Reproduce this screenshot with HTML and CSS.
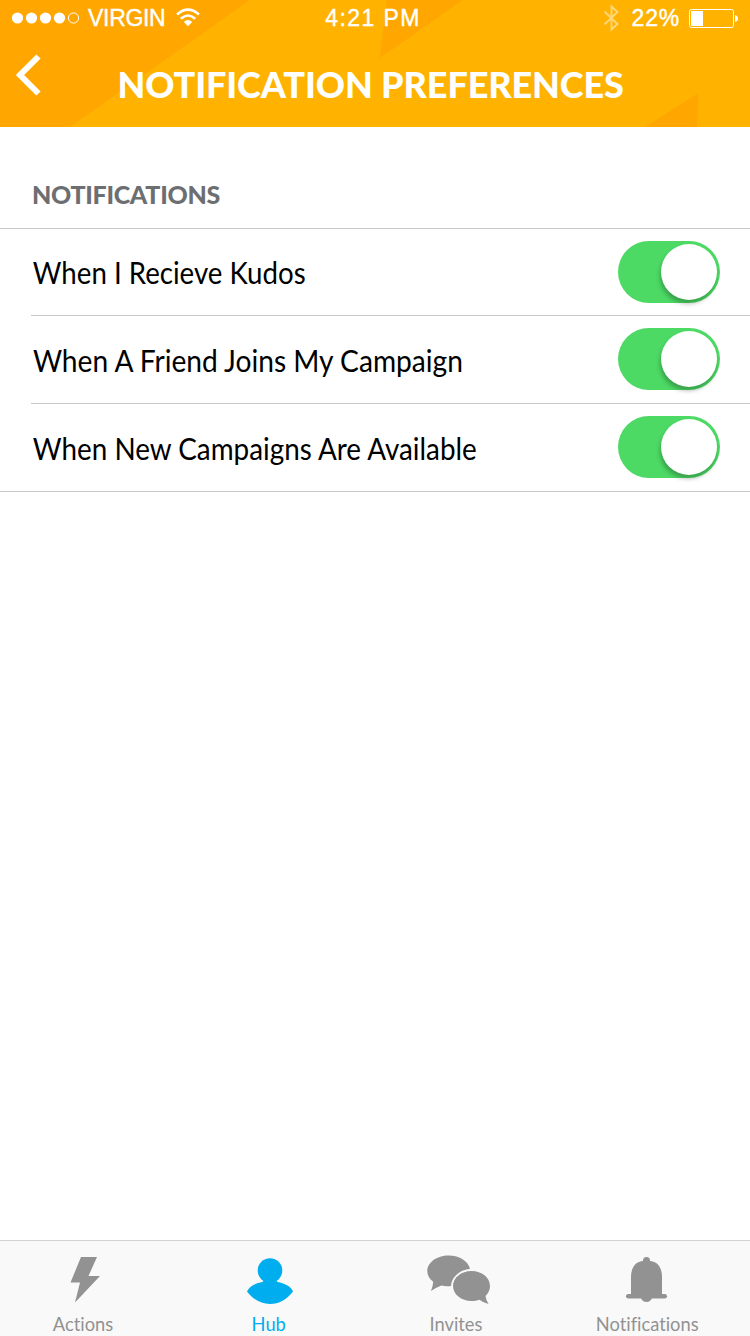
FILE: index.html
```html
<!DOCTYPE html>
<html lang="en">
<head>
<meta charset="utf-8">
<title>Notification Preferences</title>
<link rel="stylesheet" href="styles.css">
</head>
<body>
<div class="screen">
  <header class="header">
    <svg class="header-pattern" viewBox="0 0 750 127" aria-hidden="true">
      <path d="M0 0H250L70 127H0ZM386.500 0H463L380 58ZM645 127L698.500 93L697 127Z" fill="#ffa700"/>
    </svg>
    <div class="status">
      <div class="status-left">
        <svg width="68" height="14" viewBox="0 0 68 14">
          <g fill="#fff"><circle cx="5.500" cy="7" r="5.600"/><circle cx="19.500" cy="7" r="5.600"/><circle cx="33.500" cy="7" r="5.600"/><circle cx="47.500" cy="7" r="5.600"/></g>
          <circle cx="61.500" cy="7" r="5.100" fill="none" stroke="#fff"/>
        </svg>
        <span class="carrier">VIRGIN</span>
        <svg class="wifi" width="24" height="19" viewBox="0 0 24 19" fill="none" stroke="#fff" stroke-width="2.600">
          <path d="M1 6.500Q12 -3.200 23 6.500M4.800 10.700Q12 4.300 19.200 10.700"/>
          <path d="M7.800 14Q12 10.200 16.200 14L12 18.300Z" fill="#fff" stroke="none"/>
        </svg>
      </div>
      <span class="clock">4:21 PM</span>
      <div class="status-right">
        <svg class="bluetooth" width="17" height="28" viewBox="0 0 17 28" fill="none" stroke="#ffd67a" stroke-width="1.900">
          <path d="M1.500 7.500L14.500 20L8.500 25.500V2.500L14.500 8L1.500 20.500"/>
        </svg>
        <span class="percent">22%</span>
        <svg width="49" height="19" viewBox="0 0 49 19">
          <rect x=".5" y=".5" width="44" height="18" rx="2" fill="none" stroke="#fff"/>
          <rect x="2" y="2" width="12" height="15" fill="#fff"/>
          <path d="M46 6Q49 6.500 49 9.500T46 13Z" fill="#fff"/>
        </svg>
      </div>
    </div>
    <div class="titlebar">
      <svg class="back" width="26" height="42" viewBox="0 0 26 42"><path d="M22.500 2.500L4 21L22.500 39.500" fill="none" stroke="#fff" stroke-width="6"/></svg>
      <h1 class="title">NOTIFICATION PREFERENCES</h1>
    </div>
  </header>
  <main class="content">
    <h2 class="section-title">NOTIFICATIONS</h2>
    <ul class="list">
      <li class="row"><span class="label label-kudos">When I Recieve Kudos</span><span class="toggle"><span class="knob"></span></span></li>
      <li class="row"><span class="label label-friend">When A Friend Joins My Campaign</span><span class="toggle"><span class="knob"></span></span></li>
      <li class="row"><span class="label label-campaigns">When New Campaigns Are Available</span><span class="toggle"><span class="knob"></span></span></li>
    </ul>
  </main>
  <nav class="tabs">
    <a class="tab">
      <svg width="110" height="70" viewBox="28 1241 110 70"><path d="M81 1257H97L88.500 1276H100L75 1302.500L80 1282.500H70.500Z" fill="currentColor"/></svg>
      <span class="tab-label">Actions</span>
    </a>
    <a class="tab tab-active">
      <svg width="110" height="70" viewBox="214 1241 110 70"><g fill="currentColor"><circle cx="270" cy="1270.500" r="12.300"/><path d="M264 1280H276L277.500 1282C284.500 1283 291 1286.500 293 1291.500C287 1299.500 279 1304 270 1304S253 1299.500 247 1291.500C249 1286.500 255.500 1283 262.500 1282Z"/></g></svg>
      <span class="tab-label">Hub</span>
    </a>
    <a class="tab">
      <svg width="110" height="70" viewBox="401 1241 110 70"><g fill="currentColor"><path d="M448.500 1255.500C460 1255.500 468.500 1261.500 470 1269C460 1269.500 451.500 1277 451 1286C447.500 1286.500 444.500 1286.300 441.500 1285.500Q436 1287.500 431 1291Q433 1286 433.200 1281.800C429.500 1279 427.300 1275.500 427.300 1271.200C427.300 1262.500 436.800 1255.500 448.500 1255.500Z"/><path d="M471.500 1271C481.800 1271 490 1277.500 490 1286C490 1289.800 488.500 1293 485.500 1296Q486 1300 488.500 1304Q483.500 1303 479.500 1299.700C477 1300.600 474.300 1301 471.500 1301C461.200 1301 453 1294.300 453 1286S461.200 1271 471.500 1271Z"/></g></svg>
      <span class="tab-label">Invites</span>
    </a>
    <a class="tab">
      <svg width="110" height="70" viewBox="592 1241 110 70"><g fill="currentColor"><circle cx="646.500" cy="1260.500" r="3.500"/><path d="M631 1295V1277C631 1267 636 1261.500 643 1261H650C657 1261.500 662 1267 662 1277V1295Z"/><rect x="626" y="1294" width="41" height="4.500" rx="2.250"/><path d="M641 1298Q642.500 1302 646.500 1302T652 1298Z"/></g></svg>
      <span class="tab-label">Notifications</span>
    </a>
  </nav>
</div>
</body>
</html>
```

FILE: styles.css
```css
* { box-sizing: border-box; }
body { margin: 0; background: #fff; font-family: Lato, "Open Sans", sans-serif; font-variant-ligatures: none; }
svg { display: block; flex: none; }
.screen { width: 750px; height: 1336px; display: flex; flex-direction: column; overflow: hidden; }

.header { position: relative; height: 127px; flex: none; background: #ffb300; color: #fff; }
.header-pattern { position: absolute; inset: 0; width: 750px; height: 127px; }
.status { position: relative; height: 36px; display: grid; grid-template-columns: 1fr auto 1fr; align-items: center; padding: 0 12px; font-family: "Liberation Sans", Arial, sans-serif; font-size: 23px; line-height: 36px; -webkit-text-stroke: .4px #fff; }
.status-left, .status-right { display: flex; align-items: center; }
.status-right { justify-content: flex-end; }
.carrier { margin-left: 8px; letter-spacing: -.3px; }
.wifi { margin-left: 11px; margin-bottom: 2px; }
.clock { letter-spacing: 1.4px; margin-right: 4px; }
.percent { margin: 0 9px 0 12px; letter-spacing: .8px; }
.titlebar { position: relative; height: 91px; display: flex; padding-left: 16px; }
.back { margin-top: 18px; }
.title { margin: 25px 0 0 75.5px; font-size: 36px; font-weight: 900; line-height: 46px; letter-spacing: -.1px; white-space: nowrap; }

.content { flex: 1; }
.section-title { margin: 0; height: 102px; padding: 52px 0 0 32px; border-bottom: 1px solid #c8c7cc; color: #6d6e71; font-size: 25px; font-weight: 900; line-height: 30px; letter-spacing: -.3px; }
.list { margin: 0; padding: 0 0 0 31px; list-style: none; border-bottom: 1px solid #c8c7cc; }
.row { height: 88px; display: flex; align-items: center; justify-content: space-between; padding-right: 30px; border-bottom: 1px solid #c8c7cc; }
.row:first-child { height: 87px; }
.row:last-child { height: 87px; border-bottom: 0; }
.label { padding-left: 2px; color: #000; font-size: 30px; line-height: 40px; white-space: nowrap; transform-origin: 0 50%; }
.label-kudos { transform: scaleX(.922); }
.label-friend { transform: scaleX(.938); }
.label-campaigns { transform: scaleX(.928); }
.toggle { width: 102px; height: 62px; margin-bottom: 1px; border-radius: 31px; background: #4cd964; display: flex; justify-content: flex-end; padding: 3px 3px 0 0; }
.knob { width: 56px; height: 56px; border-radius: 50%; background: #fff; box-shadow: -1px 4px 4px rgba(0, 0, 0, .25); }

.tabs { height: 96px; flex: none; display: grid; grid-template-columns: 166px 206px 168px 214px; background: #f9f9f9; border-top: 1px solid #d2d2d2; }
.tab { display: flex; flex-direction: column; align-items: center; color: #929292; }
.tab-active { color: #00aeef; }
.tab-label { font-size: 20px; line-height: 24px; white-space: nowrap; transform: scaleX(.915); }
```
